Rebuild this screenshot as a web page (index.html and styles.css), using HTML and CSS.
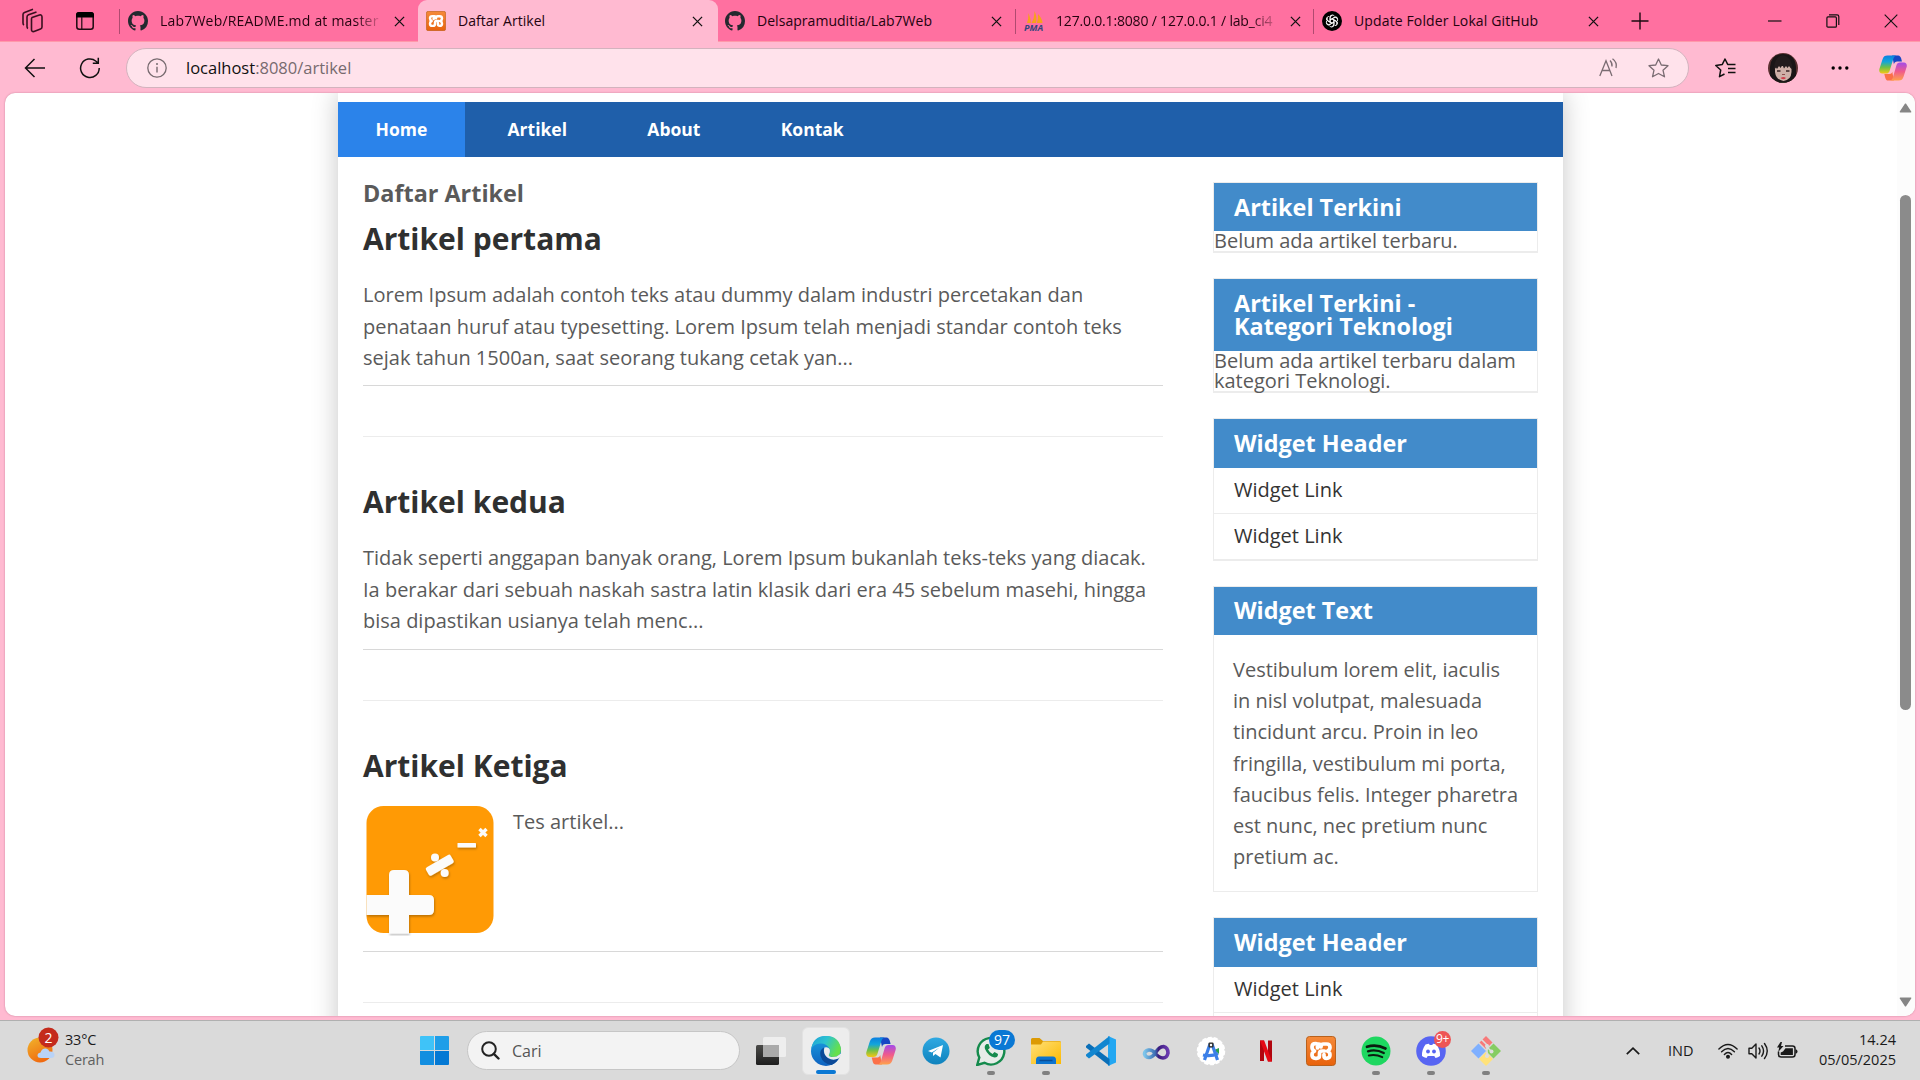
FILE: index.html
```html
<!DOCTYPE html>
<html lang="id">
<head>
<meta charset="utf-8">
<title>Daftar Artikel</title>
<link rel="stylesheet" href="styles.css">
</head>
<body>
<svg width="0" height="0" class="defs" aria-hidden="true">
  <defs>
    <linearGradient id="gOrange" x1="0" y1="0" x2="0" y2="1"><stop offset="0" stop-color="#f58a3a"/><stop offset="1" stop-color="#e8620c"/></linearGradient>
    <linearGradient id="gCopA" x1="0" y1="0" x2="0" y2="1"><stop offset="0" stop-color="#0a7fe0"/><stop offset=".35" stop-color="#12a5dc"/><stop offset=".65" stop-color="#6cc04a"/><stop offset="1" stop-color="#f6c713"/></linearGradient>
    <linearGradient id="gCopB" x1="0" y1="0" x2="0" y2="1"><stop offset="0" stop-color="#a24bea"/><stop offset=".5" stop-color="#f05a8c"/><stop offset="1" stop-color="#ffa24b"/></linearGradient>
    <linearGradient id="gEdge" x1="0" y1="0" x2="1" y2=".4"><stop offset="0" stop-color="#1f9fd8"/><stop offset=".5" stop-color="#2cc3d0"/><stop offset="1" stop-color="#66e04b"/></linearGradient>
    <linearGradient id="gEdge2" x1="0" y1="0" x2="0" y2="1"><stop offset="0" stop-color="#1ba0e0"/><stop offset="1" stop-color="#0f62c0"/></linearGradient>
    <linearGradient id="gSun" x1="0" y1="0" x2=".5" y2="1"><stop offset="0" stop-color="#f0b52c"/><stop offset="1" stop-color="#f06a10"/></linearGradient>
    <linearGradient id="gFolder" x1="0" y1="0" x2="1" y2="1"><stop offset="0" stop-color="#ffe07a"/><stop offset="1" stop-color="#fcb900"/></linearGradient>
    <linearGradient id="gTg" x1="0" y1="0" x2="0" y2="1"><stop offset="0" stop-color="#2fa9e2"/><stop offset="1" stop-color="#0f82bd"/></linearGradient>
    <linearGradient id="gVs" x1="0" y1="0" x2="1" y2="0"><stop offset="0" stop-color="#7cc4ea"/><stop offset=".45" stop-color="#3c6fb4"/><stop offset=".6" stop-color="#3b1a7c"/><stop offset="1" stop-color="#6a3ab0"/></linearGradient>
    <linearGradient id="gDark" x1="0" y1="0" x2="0" y2="1"><stop offset="0" stop-color="#4a4a48"/><stop offset="1" stop-color="#1e1e1e"/></linearGradient>
    <symbol id="github" viewBox="0 0 16 16"><path fill="#24292f" d="M8 0C3.58 0 0 3.58 0 8c0 3.54 2.29 6.53 5.47 7.59.4.07.55-.17.55-.38 0-.19-.01-.82-.01-1.49-2.01.37-2.53-.49-2.69-.94-.09-.23-.48-.94-.82-1.13-.28-.15-.68-.52-.01-.53.63-.01 1.08.58 1.23.82.72 1.21 1.87.87 2.33.66.07-.52.28-.87.51-1.07-1.78-.2-3.64-.89-3.64-3.95 0-.87.31-1.59.82-2.15-.08-.2-.36-1.02.08-2.12 0 0 .67-.21 2.2.82.64-.18 1.32-.27 2-.27s1.36.09 2 .27c1.53-1.04 2.2-.82 2.2-.82.44 1.1.16 1.92.08 2.12.51.56.82 1.27.82 2.15 0 3.07-1.87 3.75-3.65 3.95.29.25.54.73.54 1.48 0 1.07-.01 1.93-.01 2.2 0 .21.15.46.55.38A8.01 8.01 0 0 0 16 8c0-4.42-3.58-8-8-8z"/></symbol>
    <symbol id="close" viewBox="0 0 12 12"><path d="M1 1L11 11M11 1L1 11" stroke="#111" stroke-width="1.4" fill="none"/></symbol>
    <symbol id="xampp" viewBox="0 0 30 30"><rect x=".5" y=".5" width="29" height="29" rx="3" fill="url(#gOrange)" stroke="#b9611c"/><path d="M11.500 12V9.500Q11.500 7.700 9.500 7.700Q6 7.700 6 11Q6 14 8.500 15Q6 16 6 19Q6 22.300 9.500 22.300H10.500Q13.500 22.300 13.500 19.500V17.500Q13.500 15 16 15H18.500M11 8H12.500Q15 8 15 11Q15 8 17.500 8H20.500Q24 8 24 11.300Q24 14 21.500 15Q24 16 24 19Q24 22.300 20.500 22.300Q18 22.300 18 20V18.500" fill="none" stroke="#fff" stroke-width="3.700" stroke-linejoin="round" stroke-linecap="round"/></symbol>
    <symbol id="copilot" viewBox="0 0 30 30"><path d="M14 1.500H20.500C22.200 1.500 23.200 3 23.700 4.600L24.600 8H19.500C17.500 8 16.500 9 16 11Z" fill="#1747c4"/><path d="M9 1.500H18.500C16.500 2.200 15.800 3.500 15.300 5.300L11.400 18C10.800 20 9.600 21 7.600 21H3.500C.7 21 -.3 18.500 .4 16L3.800 5.500C4.800 2.600 6.200 1.500 9 1.500Z" fill="url(#gCopA)"/><path d="M16 28.500H9.800C8 28.500 7.200 27 6.700 25.400L5.700 21.500H10.500C12.500 21.500 13.700 21 14.200 19Z" fill="#fb7048"/><path d="M21 28.500H11.800C13.800 27.800 14.500 26.500 15 24.700L18.700 12C19.300 10 20.500 9 22.500 9H26.600C29.300 9 30.300 11.500 29.600 14L26.300 24.500C25.300 27.400 23.900 28.500 21 28.500Z" fill="url(#gCopB)"/></symbol>
  </defs>
</svg>

<header class="tabstrip">
  <div class="strip-tools">
    <svg width="21" height="25" viewBox="0 0 21 25" fill="none" stroke="#3a0f1f" stroke-width="1.600" stroke-linejoin="round"><path d="M10 9.500L17.500 7Q20 6.500 20 9V19Q20 20.500 18.500 21L12 23.500Q9.500 24 9.500 21.500V11Q9.500 10 10 9.500Z"/><path d="M6 20.500Q5 20 5 18.500V9Q5 7.500 6.500 6.800L14.500 4"/><path d="M2 17Q1 16.500 1 15V6.500Q1 5 2.500 4.400L11 1.200"/></svg>
    <svg class="pane-icon" width="18" height="18" viewBox="0 0 18 18"><rect x=".8" y=".8" width="16.400" height="16.400" rx="2.500" fill="none" stroke="#1c0a10" stroke-width="1.500"/><path d="M0 5.500V3Q0 0 3 0H15Q18 0 18 3V5.500Z" fill="#000"/><path d="M5.800 5V17" stroke="#1c0a10" stroke-width="1.200"/></svg>
  </div>
  <div class="tab sep-left">
    <svg class="fav"><use href="#github"/></svg><span class="tab-title fade t1">Lab7Web/README.md at master ·</span><svg class="tab-x"><use href="#close"/></svg>
  </div>
  <div class="tab active">
    <svg class="fav"><use href="#xampp"/></svg><span class="tab-title">Daftar Artikel</span><svg class="tab-x"><use href="#close"/></svg>
  </div>
  <div class="tab after-active">
    <svg class="fav"><use href="#github"/></svg><span class="tab-title">Delsapramuditia/Lab7Web</span><svg class="tab-x"><use href="#close"/></svg>
  </div>
  <div class="tab sep-left">
    <svg class="fav" viewBox="0 0 20 20"><path d="M3 12Q4.500 8 4.500 2Q7 8 6.800 12ZM7.500 12Q10.500 7 10.500 0Q13.500 6 12 12ZM12.800 12Q14.500 8 14 3Q18 7 18.500 12Z" fill="#f7a11b"/><text x="0" y="19.500" class="pma">PMA</text></svg><span class="tab-title fade t4">127.0.0.1:8080 / 127.0.0.1 / lab_ci4</span><svg class="tab-x"><use href="#close"/></svg>
  </div>
  <div class="tab sep-left">
    <svg class="fav" viewBox="0 0 20 20"><circle cx="10" cy="10" r="10" fill="#000"/><g fill="none" stroke="#fff" stroke-width=".9"><path id="petal" d="M8 11.200V6.500Q8 4 10.300 4Q12 4 12.700 5.500M8 9L11.800 6.800Q14 5.800 15.200 7.500"/><use href="#petal" transform="rotate(60 10 10)"/><use href="#petal" transform="rotate(120 10 10)"/><use href="#petal" transform="rotate(180 10 10)"/><use href="#petal" transform="rotate(240 10 10)"/><use href="#petal" transform="rotate(300 10 10)"/></g></svg><span class="tab-title t5">Update Folder Lokal GitHub</span><svg class="tab-x"><use href="#close"/></svg>
  </div>
  <div class="newtab"><svg width="18" height="18" viewBox="0 0 18 18"><path d="M9 .5V17.500M.5 9H17.500" stroke="#1c0a10" stroke-width="1.400"/></svg></div>
  <div class="winctl">
    <svg viewBox="0 0 14 14"><path d="M0 7H13.500" stroke="#111" stroke-width="1.200"/></svg>
    <svg viewBox="0 0 14 14"><rect x=".9" y="2.900" width="9.500" height="10.300" rx="1" fill="none" stroke="#111" stroke-width="1.200"/><path d="M3 .8H11Q12.800 .8 12.800 2.600V11" fill="none" stroke="#111" stroke-width="1.200"/></svg>
    <svg viewBox="0 0 14 14"><path d="M.7 .7L13.300 13.300M13.300 .7L.7 13.300" stroke="#111" stroke-width="1.100"/></svg>
  </div>
</header>

<div class="toolbar">
  <svg class="ico-back" width="22" height="20" viewBox="0 0 22 20"><path d="M21 10H1.500M10.500 1L1.500 10L10.500 19" fill="none" stroke="#111" stroke-width="1.500"/></svg>
  <svg class="ico-reload" width="22" height="22" viewBox="0 0 22 22"><path d="M20.200 11A9.300 9.300 0 1 1 17 4.200L19 6M19.300 .8V6.200H13.800" fill="none" stroke="#111" stroke-width="1.500"/></svg>
  <div class="omnibox">
    <svg width="20" height="20" viewBox="0 0 20 20"><circle cx="10" cy="10" r="9.200" fill="none" stroke="#776a6f" stroke-width="1.300"/><path d="M10 8.800V14.500" stroke="#776a6f" stroke-width="1.400"/><circle cx="10" cy="6" r="1" fill="#776a6f"/></svg>
    <span class="url"><b>localhost</b>:8080/artikel</span>
    <svg class="ico-read" width="20" height="20" viewBox="0 0 20 20" fill="none" stroke="#7a6c72" stroke-width="1.300"><path d="M.8 18L7 2.800L13 18M3 12.500H11M11 2.500Q13.500 5 13 8.500M13.500 .8Q18.500 4.500 17 10"/></svg>
    <svg class="ico-star" width="21" height="20" viewBox="0 0 21 20"><path d="M10.500 1L13.300 7L20 7.700L15 12.200L16.500 18.800L10.500 15.500L4.500 18.800L6 12.200L1 7.700L7.700 7Z" fill="none" stroke="#7a6c72" stroke-width="1.300" stroke-linejoin="round"/></svg>
  </div>
  <svg class="ico-fav" width="21" height="20" viewBox="0 0 21 20" fill="none" stroke="#111" stroke-width="1.500" stroke-linejoin="round"><path d="M20.500 6.400H12.700L10 1L7.300 6.400L.8 7.500L5.700 12L4.500 18.700L9.500 16M13 10.500H20.500M13 14.500H20.500"/></svg>
  <svg class="avatar" viewBox="0 0 30 30"><clipPath id="av"><circle cx="15" cy="15" r="15"/></clipPath><g clip-path="url(#av)"><rect width="30" height="30" fill="#5a3030"/><path d="M2 30V14Q3 1 15 1Q27 1 28 14V30Z" fill="#1a1617"/><path d="M7 13H23.500V19Q23 27 15.500 28Q8 27 7 19Z" fill="#cfb0a8"/><path d="M6 17Q6 4 15 2Q24 4 25 17L22.500 15L21 13L19.500 15L18 13L16 15.500L14.500 12L12.500 15L11 13L9 16L8 14.500Z" fill="#231c1d"/><path d="M9 18H12.500M18 18H21.500" stroke="#3a2424" stroke-width="1.600"/><path d="M14 21.500H17" stroke="#8d4f4c" stroke-width="1.200"/><path d="M12.500 25Q15.500 23.200 18 25Q15.500 27.500 12.500 25Z" fill="#d0404c"/><path d="M9 30Q15 27.500 22 30Z" fill="#34322a"/></g></svg>
  <svg class="ico-more" width="18" height="4" viewBox="0 0 18 4"><circle cx="2.200" cy="2" r="1.700"/><circle cx="9" cy="2" r="1.700"/><circle cx="15.800" cy="2" r="1.700"/></svg>
  <svg class="ico-cop" width="28" height="28"><use href="#copilot"/></svg>
</div>

<div class="frame">
  <div class="viewport">
    <div class="container">
      <nav class="menu"><a class="on">Home</a><a>Artikel</a><a>About</a><a>Kontak</a></nav>
      <div class="columns">
        <main class="main">
          <h3 class="page-title">Daftar Artikel</h3>
          <article class="entry first">
            <h2>Artikel pertama</h2>
            <p>Lorem Ipsum adalah contoh teks atau dummy dalam industri percetakan dan<br>penataan huruf atau typesetting. Lorem Ipsum telah menjadi standar contoh teks<br>sejak tahun 1500an, saat seorang tukang cetak yan...</p>
          </article>
          <hr class="divider">
          <article class="entry">
            <h2>Artikel kedua</h2>
            <p>Tidak seperti anggapan banyak orang, Lorem Ipsum bukanlah teks-teks yang diacak.<br>Ia berakar dari sebuah naskah sastra latin klasik dari era 45 sebelum masehi, hingga<br>bisa dipastikan usianya telah menc...</p>
          </article>
          <hr class="divider">
          <article class="entry third">
            <h2>Artikel Ketiga</h2>
            <div class="media">
              <svg class="thumb" viewBox="0 0 128 130"><defs><filter id="sh" x="-20%" y="-20%" width="150%" height="150%"><feDropShadow dx=".7" dy="1.500" stdDeviation="1.300" flood-opacity=".28"/></filter></defs><rect x=".5" y="0" width="127" height="127" rx="17" fill="#ff9a05"/><g fill="#fbfbfb" filter="url(#sh)"><path d="M.5 89H23V69Q23 64 28 64H38Q43 64 43 69V89H63Q68 89 68 94V104Q68 109 63 109H43V127.500H23V109H.5Z"/><rect x="59.500" y="54.500" width="28.500" height="9.500" rx="2" transform="rotate(-30 73.700 59.200)"/><circle cx="69" cy="51.500" r="4"/><circle cx="78.700" cy="67" r="4"/><rect x="91.500" y="37" width="18.500" height="4.500" rx=".6"/></g><path d="M113.500 23L120.500 30M120.500 23L113.500 30" stroke="#fbfbfb" stroke-width="3.400"/></svg>
              <p>Tes artikel...</p>
            </div>
          </article>
          <hr class="divider">
        </main>
        <aside class="sidebar">
          <section class="widget"><h3>Artikel Terkini</h3><div class="plain">Belum ada artikel terbaru.</div></section>
          <section class="widget"><h3>Artikel Terkini -<br>Kategori Teknologi</h3><div class="plain">Belum ada artikel terbaru dalam<br>kategori Teknologi.</div></section>
          <section class="widget links"><h3>Widget Header</h3><a>Widget Link</a><a>Widget Link</a></section>
          <section class="widget text"><h3>Widget Text</h3><p>Vestibulum lorem elit, iaculis<br>in nisl volutpat, malesuada<br>tincidunt arcu. Proin in leo<br>fringilla, vestibulum mi porta,<br>faucibus felis. Integer pharetra<br>est nunc, nec pretium nunc<br>pretium ac.</p></section>
          <section class="widget links"><h3>Widget Header</h3><a>Widget Link</a><a></a></section>
        </aside>
      </div>
    </div>
    <div class="scrollbar">
      <svg width="13" height="10" viewBox="0 0 13 10"><path d="M6.500 1.200L11.600 8.800H1.400Z" fill="#858585" stroke="#858585" stroke-width="1.500" stroke-linejoin="round"/></svg>
      <div class="thumbbar"></div>
      <svg width="13" height="10" viewBox="0 0 13 10"><path d="M6.500 8.800L11.600 1.200H1.400Z" fill="#858585" stroke="#858585" stroke-width="1.500" stroke-linejoin="round"/></svg>
    </div>
  </div>
</div>

<footer class="taskbar">
  <div class="weather">
    <svg width="34" height="36" viewBox="0 0 34 36"><circle cx="13" cy="23" r="12.500" fill="url(#gSun)"/><path d="M14 31Q10.500 31 10.500 28.500Q10.500 26 13.500 25.500Q15 21 19 21.500Q21.500 22 22.500 24.500Q27.500 24 27.500 28Q27.500 31 24 31Z" fill="#b9d3f7"/><circle cx="21.500" cy="10.500" r="10" fill="#c42b1c"/><text x="21.500" y="15.500" class="wnum">2</text></svg>
    <div class="wtext"><span>33°C</span><span class="dim">Cerah</span></div>
  </div>
  <div class="center">
    <svg class="start" width="29" height="29" viewBox="0 0 29 29"><path d="M0 1Q0 0 1 0H14V14H0Z" fill="#3fc3f8"/><path d="M15 0H28Q29 0 29 1V14H15Z" fill="#1f9ee8"/><path d="M0 15H14V29H1Q0 29 0 28Z" fill="#138ee0"/><path d="M15 15H29V28Q29 29 28 29H15Z" fill="#0479d4"/></svg>
    <div class="search"><svg width="19" height="19" viewBox="0 0 19 19"><circle cx="8" cy="8" r="6.800" fill="none" stroke="#222" stroke-width="2"/><path d="M12.800 12.800L17.500 17.500" stroke="#222" stroke-width="2.400" stroke-linecap="round"/></svg><span>Cari</span></div>
    <div class="apps">
      <div class="app"><svg viewBox="0 0 30 30"><rect x="0" y="9" width="23" height="20" rx="1.500" fill="url(#gDark)"/><rect x="7" y="1" width="23" height="20" rx="1.500" fill="#f4f4f4" opacity=".75"/><rect x="7" y="9" width="16" height="12" fill="#aaa"/></svg></div>
      <div class="app open"><svg viewBox="0 0 30 30"><circle cx="15" cy="15" r="15" fill="url(#gEdge2)"/><path d="M.3 13Q2 0 15 0Q28 0 30 13Q30 21 22 21Q17 21 18 18.500Q20 16 18.500 12.500Q15 7 9 7.500Q2.500 8 .3 13Z" fill="url(#gEdge)"/><path d="M13 11.500Q8 14 9.500 20Q12 28 20.500 29Q26 26.500 28 21.800Q22 25 17 22Q11.500 18 13 11.500Z" fill="#0c4a98"/><path d="M13.500 11.500Q17 10.500 18.600 13Q19.500 16 18 18.500Q17 21 22 21Q26 21 28.500 18.500L30.500 17Q30 21 27.500 22.500Q22 25 17 22Q11.500 18 13.500 11.500Z" fill="#ededed"/></svg></div>
      <div class="app"><svg><use href="#copilot"/></svg></div>
      <div class="app"><svg viewBox="0 0 30 30"><circle cx="15" cy="15" r="13.500" fill="url(#gTg)"/><path d="M7 15L22 9L19.500 21.500L14.500 18L12 20V16.800L18.500 11.500L10.800 16.400Z" fill="#fff"/></svg></div>
      <div class="app run"><svg viewBox="0 0 30 30"><path d="M1.200 29L3.300 21.500A13.300 13.300 0 1 1 8.500 26.800Z" fill="#e6ece8" stroke="#148a4c" stroke-width="2.400"/><path d="M10.500 8Q8 9.500 9 13Q12 20 18.500 21.500Q22 21.500 22 18L18.500 16L16.500 18Q13.500 16.500 12 13.500L13.800 12L12.500 8Z" fill="#148a4c"/></svg><span class="badge blue">97</span></div>
      <div class="app run"><svg viewBox="0 0 30 30"><path d="M0 3.500Q0 2 1.500 2H8.500L12 5H28.500Q30 5 30 6.500V12H0Z" fill="#dc9a04"/><path d="M0 8.500H10L12 5.500H29Q30 5.500 30 7V28H0Z" fill="url(#gFolder)"/><path d="M5 28V24Q5 20.500 8 20.500H22Q25 20.500 25 24V28Z" fill="#0d74cf"/><path d="M8.500 24.500H21.500" stroke="#0a4d96" stroke-width="1.500"/></svg></div>
      <div class="app"><svg viewBox="0 0 30 30"><path d="M22 0L30 3.500V26.500L22 30Z" fill="#23a7f2"/><path d="M0 10L3 7.500L23.500 23V30L0 11.500Z" fill="#0a6fb8"/><path d="M0 20L3 22.500L23.500 7.500V0L0 18.500Z" fill="#1286d0"/></svg></div>
      <div class="app"><svg viewBox="0 0 30 30"><path d="M14 17.500Q18 10.500 22.500 10.500Q27 11.500 27 17Q26 22 22 22Q18 22 14 17Q11 13.500 7.500 14Q3.500 15 3.500 18Q4.500 21.500 8 21.500Q11 21.500 14 17.500Z" fill="none" stroke="url(#gVs)" stroke-width="3.600"/></svg></div>
      <div class="app"><svg viewBox="0 0 30 30"><circle cx="15" cy="15" r="13.500" fill="#fff" stroke="#fff" stroke-width="1.500" stroke-dasharray="4 2"/><path d="M18 14L23 12V18Z" fill="#2d9e50"/><path d="M14 8L8.500 24M16 8L21.500 24M7 19Q15 21 22 17.500" fill="none" stroke="#3b7fe8" stroke-width="3.200"/><rect x="12.500" y="6.500" width="5" height="5" rx="1" fill="#333"/><circle cx="15" cy="9" r="1.200" fill="#fff"/></svg></div>
      <div class="app"><svg viewBox="0 0 30 30"><path d="M9 4.500H13V25H9ZM17 4.500H21V25.500H17Z" fill="#b1060f"/><path d="M9 4.500H13.200L21 25.500H16.800Z" fill="#e50914"/></svg></div>
      <div class="app"><svg><use href="#xampp"/></svg></div>
      <div class="app run"><svg viewBox="0 0 30 30"><circle cx="15" cy="15" r="14.500" fill="#1ed760"/><g fill="none" stroke="#0b1c10" stroke-linecap="round"><path d="M6 10.800Q15.500 8 24.500 12.500" stroke-width="2.700"/><path d="M7 15.300Q15 13 22.800 17" stroke-width="2.300"/><path d="M7.800 19.500Q14.500 17.800 21.300 21.200" stroke-width="1.900"/></g></svg></div>
      <div class="app run"><svg viewBox="0 0 30 30"><circle cx="15" cy="15" r="14.800" fill="#5865f2"/><path d="M9.500 8.500Q11.500 7.800 13 7.800L13.700 9H16.300L17 7.800Q18.500 7.800 20.500 8.500Q24.500 14 24 20Q22 21.500 19.500 22L18.300 20H11.700L10.500 22Q8 21.500 6 20Q5.500 14 9.500 8.500Z" fill="#fff"/><ellipse cx="12" cy="15.500" rx="1.900" ry="2.100" fill="#5865f2"/><ellipse cx="18" cy="15.500" rx="1.900" ry="2.100" fill="#5865f2"/></svg><span class="badge red">9+</span></div>
      <div class="app run"><svg viewBox="0 0 30 30"><path d="M15 0L21.500 6.500L15 13L8.500 6.500Z" fill="#f77a7a"/><path d="M7.500 7.500L14 14L15 15L7.500 22.500L0 15Z" fill="#7fb0ff"/><path d="M22.500 7.500L30 15L22.500 22.500L15 15Z" fill="#86cd62"/><path d="M15 16L22 23L15 30L8 23Z" fill="#ffe27a"/><path d="M10.500 3.500L16 9V21M16 11L20.500 15.500" stroke="#dedede" stroke-width="1.600" fill="none"/><circle cx="16" cy="10" r="2" fill="#dedede"/><circle cx="20.500" cy="15.500" r="2" fill="#dedede"/><circle cx="16" cy="20" r="2" fill="#dedede"/></svg></div>
    </div>
  </div>
  <div class="tray">
    <svg class="chev" width="14" height="8" viewBox="0 0 14 8"><path d="M.8 7.200L7 1.200L13.200 7.200" fill="none" stroke="#1a1a1a" stroke-width="1.700"/></svg>
    <span class="lang">IND</span>
    <svg class="wifi" width="20" height="16" viewBox="0 0 20 16" fill="none" stroke="#1a1a1a" stroke-width="1.400" stroke-linecap="round"><path d="M.9 6Q10-3 19.100 6M3.600 8.800Q10 2.200 16.400 8.800M6.400 11.400Q10 7.600 13.600 11.400"/><circle cx="10" cy="13.800" r="1.300" fill="#1a1a1a"/></svg>
    <svg class="vol" width="21" height="18" viewBox="0 0 21 18" fill="none" stroke="#1a1a1a" stroke-width="1.400" stroke-linejoin="round" stroke-linecap="round"><path d="M1 6.200H3.800L8 2V16L3.800 11.800H1ZM11 6Q13 9 11 12M13.800 3.800Q17.300 9 13.800 14.200M16.500 1.500Q22 9 16.500 16.500"/></svg>
    <svg class="bat" width="21" height="17" viewBox="0 0 21 17"><path d="M8 4H15.500Q18 4 18 6.500V12.500Q18 15 15.500 15H4Q1.500 15 1.500 12.500V9.500" fill="none" stroke="#1a1a1a" stroke-width="1.500"/><path d="M8.500 6.200H15.900V12.900H3.700V10.500L6 9.500Z" fill="#1a1a1a"/><path d="M3.500 0L0 5.500H2.200L1.200 10L6.500 4H4L5 0Z" fill="#1a1a1a"/><path d="M18.500 7.500H19.300Q20.500 8 20.500 9.500Q20.500 11 19.300 11.500H18.500Z" fill="#1a1a1a"/></svg>
    <div class="clock"><span>14.24</span><span>05/05/2025</span></div>
  </div>
</footer>
</body>
</html>
```
FILE: styles.css
```css
* { box-sizing: border-box; }
html, body { margin: 0; padding: 0; }
body {
  width: 1920px; height: 1080px; overflow: hidden;
  display: flex; flex-direction: column;
  font-family: "Open Sans", "Noto Sans", sans-serif;
  background: #ffbad1;
}
.defs { position: absolute; }
svg { display: block; flex: none; }

/* Tab strip */
.tabstrip { height: 42px; flex: none; display: flex; background: #ff70a0; border-bottom: 1px solid #f9a; font-size: 14px; color: #24030f; }
.strip-tools { width: 119px; padding-left: 22px; display: flex; align-items: center; gap: 33px; }
.tab { width: 298px; height: 42px; display: flex; align-items: center; padding-left: 8px; border-left: 1px solid transparent; }
.tab.sep-left { border-image: linear-gradient(transparent 9px, #b04a70 9px, #b04a70 34px, transparent 34px) 0 0 0 1; }
.tab.active { width: 300px; background: #ffbad1; border-radius: 9px 9px 0 0; border: 0; padding-left: 8px; margin-left: 1px; }
.tab.after-active { width: 297px; padding-left: 6px; }
.fav { width: 20px; height: 20px; margin-right: 12px; }
.tab-title { width: 225px; white-space: nowrap; overflow: hidden; letter-spacing: .04px; line-height: 20px; }
.fade { mask-image: linear-gradient(90deg, #000 195px, transparent 224px); }
.t1 { letter-spacing: .2px; }
.t4 { letter-spacing: -.18px; }
.t5 { letter-spacing: .13px; }
.tab-x { width: 11px; height: 11px; margin-left: 9px; }
.pma { font: italic bold 9px "Open Sans", sans-serif; fill: #34467c; }
.newtab { width: 57px; display: flex; align-items: center; justify-content: center; }
.winctl { flex: 1; display: flex; align-items: center; justify-content: flex-end; gap: 44px; padding-right: 22px; }
.winctl svg { width: 14px; height: 14px; }

/* Toolbar */
.toolbar { height: 51px; flex: none; display: flex; align-items: center; padding-left: 24px; }
.ico-reload { margin-left: 33px; }
.omnibox { margin-left: 25px; width: 1563px; height: 40px; border: 1px solid #d3b3be; border-radius: 20px; background: #ffe2eb; display: flex; align-items: center; padding-left: 20px; padding-right: 19px; }
.url { margin-left: 19px; flex: 1; font-size: 16.5px; color: #776a6f; letter-spacing: 0; line-height: 22px; }
.url b { font-weight: 400; color: #111; }
.ico-star { margin-left: 29px; }
.ico-fav { margin-left: 26px; }
.avatar { width: 30px; height: 30px; margin-left: 32px; }
.ico-more { margin-left: 33px; }
.ico-cop { margin-left: 30px; }

/* Page frame */
.frame { height: 927px; flex: none; padding: 0 5px 4px; }
.viewport { height: 923px; background: #fff; border-radius: 10px; overflow: hidden; display: flex; box-shadow: 0 0 2px #c77c95; }
.container { width: 1225px; height: 1000px; margin-left: 333px; padding-top: 9px; background: #fff; box-shadow: 0 0 25px #c6c6c6; color: #5a5a5a; font-size: 20px; line-height: 20px; }
.menu { height: 55px; display: flex; gap: 5.300px; background: #1f5faa; }
.menu a { padding: 0 37.5px; line-height: 55px; font-size: 17.5px; font-weight: 700; color: #fff; }
.menu .on { background: #2b83ea; }
.columns { display: flex; padding: 25px; gap: 50px; }
.main { width: 800px; flex: none; }
.page-title { margin: 0; font-size: 23.4px; line-height: 23px; font-weight: 700; }
.entry { height: 181px; border-bottom: 1px solid #d8d8d8; margin-bottom: 50px; }
.entry h2 { margin: 0; padding-top: 18px; font-size: 30px; line-height: 32px; color: #2f3030; }
.divider + .entry h2 { padding-top: 17px; padding-bottom: 1px; }
.entry p { margin: 23px 0 0; font-size: 20px; line-height: 31.5px; white-space: nowrap; }
.entry.first p { margin-top: 24px; }
.divider { margin: 0 0 32px; border: 0; height: 1px; background: #ececec; }
.entry.third { height: 219px; }
.media { display: flex; }
.thumb { width: 128px; height: 130px; margin: 23px 19px 0 3px; }
.entry .media p { margin-top: 23px; }

.sidebar { width: 325px; flex: none; display: flex; flex-direction: column; gap: 25px; }
.widget { border: 1px solid #ececec; border-bottom-width: 2px; }
.widget h3 { margin: 0; padding: 12.5px 20px; font-size: 23.4px; line-height: 23.4px; background: #428bca; color: #fff; white-space: nowrap; }
.plain { white-space: nowrap; }
.links { border-bottom-width: 1px; }
.links a { display: block; height: 46px; padding-left: 20px; line-height: 44px; color: #333; border-bottom: 1px solid #ececec; }
.widget.text { border-bottom-width: 1px; }
.widget p { margin: 0; padding: 19px 19px 18.800px; font-size: 20px; line-height: 31.200px; white-space: nowrap; }

.scrollbar { width: 18px; margin-left: auto; background: #fcfcfc; display: flex; flex-direction: column; align-items: center; padding: 10px 1px 9px 0; }
.thumbbar { width: 11px; height: 515px; border-radius: 6px; background: #8b8b8b; margin: 82px 0 auto; }

/* Taskbar */
.taskbar { height: 60px; flex: none; border-top: 1px solid #b0b0b0; background: #dadada; display: flex; font-size: 14.5px; color: #1a1a1a; }
.weather { width: 420px; display: flex; padding-left: 27px; padding-top: 6px; }
.wnum { font-size: 14px; fill: #fff; text-anchor: middle; }
.wtext { display: flex; flex-direction: column; padding-left: 4px; padding-top: 3px; line-height: 20px; letter-spacing: -.2px; }
.dim { color: #5f5f5f; }
.center { width: 1094px; display: flex; align-items: center; }
.search { width: 273px; height: 39px; margin-left: 18px; border-radius: 20px; background: #f3f3f3; border: 1px solid #c6c6c6; display: flex; align-items: center; padding-left: 13px; gap: 12px; font-size: 16px; color: #555; }
.apps { display: flex; margin-left: 3px; }
.app { position: relative; width: 55px; height: 48px; display: flex; align-items: center; justify-content: center; }
.app svg { width: 30px; height: 30px; }
.app.open { width: 48px; margin: 0 3.5px; background: #ededed; border: 1px solid #e2e2e2; border-radius: 6px; }
.app.open::after, .app.run::after { content: ""; position: absolute; bottom: 0; width: 20px; height: 4px; border-radius: 2px; background: #0a78d4; }
.app.run::after { width: 8px; background: #808080; }
.badge { position: absolute; color: #fff; text-align: center; border-radius: 10px; }
.blue { left: 26px; top: 3px; width: 26px; height: 20px; line-height: 20px; font-size: 14px; background: #0a78d4; }
.red { left: 31px; top: 4px; width: 17px; height: 17px; line-height: 16px; font-size: 12px; background: #ee5555; letter-spacing: -.3px; }
.tray { flex: 1; display: flex; align-items: center; padding-left: 112px; }
.lang { margin-left: 28px; width: 26px; }
.wifi { margin-left: 24px; }
.vol { margin-left: 10px; }
.bat { margin-left: 8px; }
.clock { margin-left: auto; margin-right: 24px; display: flex; flex-direction: column; text-align: right; line-height: 20px; padding-bottom: 2px; }
```
